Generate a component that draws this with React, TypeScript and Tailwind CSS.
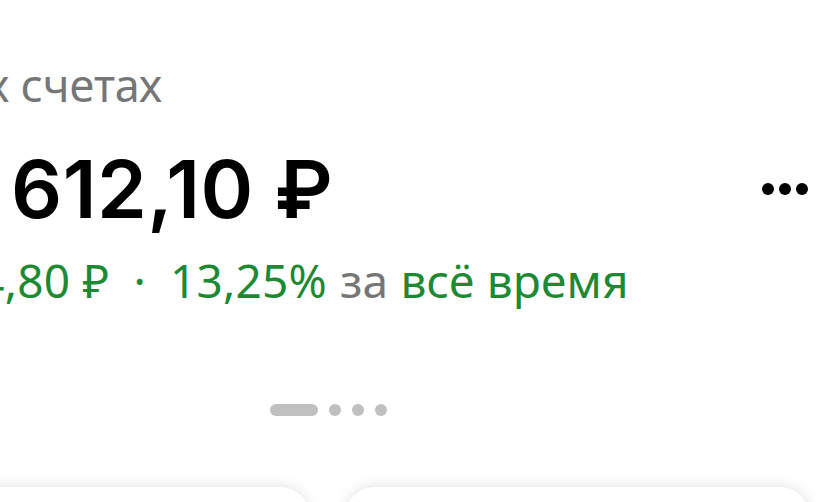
export default function App() {
  return (
    <div
      className="w-[835px] h-[502px] overflow-hidden bg-white relative"
      style={{ fontFamily: '"Noto Sans", "Open Sans", sans-serif' }}
    >
      {/* Summary block (scrolled off to the left) */}
      <div className="flex flex-col">
        <div className="mt-[62px] ml-[-155px] h-[44px] text-[45px] leading-none text-[#767676] whitespace-nowrap">
          На всех счетах
        </div>

        <div className="mt-[43px] h-[80px] flex items-center justify-between pr-[27px]">
          <div
            className="ml-[-44px] text-[80px] leading-none font-semibold text-black whitespace-nowrap tracking-[0.5px]"
            style={{ fontFamily: 'Inter, "Noto Sans", sans-serif' }}
          >
            1 612,10 ₽
          </div>
          <div className="flex gap-[5px] items-center">
            <span className="w-[12px] h-[12px] rounded-full bg-black" />
            <span className="w-[12px] h-[12px] rounded-full bg-black" />
            <span className="w-[12px] h-[12px] rounded-full bg-black" />
          </div>
        </div>

        <div className="mt-[28px] ml-[-140px] h-[45px] text-[46px] leading-none tracking-[0.2px] text-[#1d8a33] whitespace-nowrap flex items-baseline">
          <span>+1 234,80 ₽</span>
          <span className="mx-[24px]">·</span>
          <span>13,25%</span>
          <span className="ml-[13px] text-[#767676]">за</span>
          <span className="ml-[12px]">всё время</span>
        </div>

        {/* Pager dots */}
        <div className="mt-[102px] flex items-center gap-[11px] ml-[270px]">
          <span className="w-[48px] h-[12px] rounded-full bg-[#c0c0c0]" />
          <span className="w-[12px] h-[12px] rounded-full bg-[#c0c0c0]" />
          <span className="w-[12px] h-[12px] rounded-full bg-[#c0c0c0]" />
          <span className="w-[12px] h-[12px] rounded-full bg-[#c0c0c0]" />
        </div>
      </div>

      {/* Cards peeking from the bottom */}
      <div className="mt-[71px] flex gap-[35px] ml-[-60px]">
        <div className="w-[370px] h-[80px] rounded-[30px] bg-white shadow-[0_0_14px_rgba(0,0,0,0.13)]" />
        <div className="w-[465px] h-[80px] rounded-[30px] bg-white shadow-[0_0_14px_rgba(0,0,0,0.13)]" />
      </div>
    </div>
  );
}
